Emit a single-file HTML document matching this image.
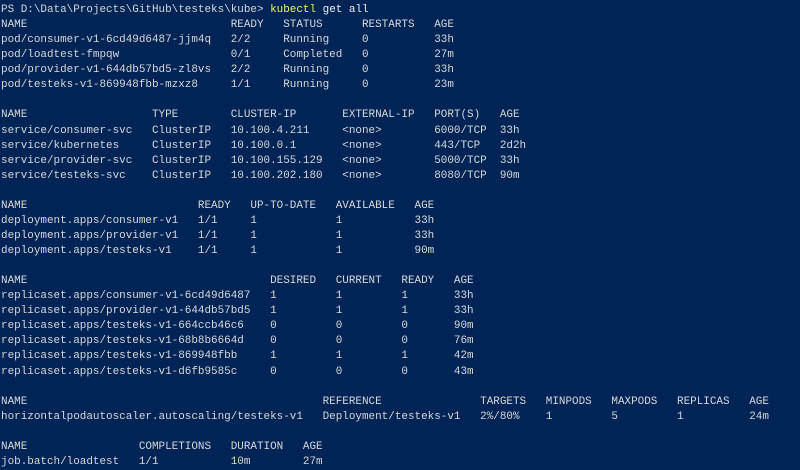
<!DOCTYPE html>
<html><head><meta charset="utf-8">
<style>
html,body{margin:0;padding:0;background:#012456;width:800px;height:469px;overflow:hidden}
pre{margin:0;position:absolute;left:1px;top:3px;font-family:"Liberation Mono",monospace;font-size:10.95px;line-height:15.07px;color:#d8d8d8;white-space:pre}
.y{color:#f5f56a}.w{color:#f0f0f0}
</style></head><body>
<pre>PS D:\Data\Projects\GitHub\testeks\kube&gt; <span class="y">kubectl</span> <span class="w">get all</span>
NAME                               READY   STATUS      RESTARTS   AGE
pod/consumer-v1-6cd49d6487-jjm4q   2/2     Running     0          33h
pod/loadtest-fmpqw                 0/1     Completed   0          27m
pod/provider-v1-644db57bd5-zl8vs   2/2     Running     0          33h
pod/testeks-v1-869948fbb-mzxz8     1/1     Running     0          23m

NAME                   TYPE        CLUSTER-IP       EXTERNAL-IP   PORT(S)   AGE
service/consumer-svc   ClusterIP   10.100.4.211     &lt;none&gt;        6000/TCP  33h
service/kubernetes     ClusterIP   10.100.0.1       &lt;none&gt;        443/TCP   2d2h
service/provider-svc   ClusterIP   10.100.155.129   &lt;none&gt;        5000/TCP  33h
service/testeks-svc    ClusterIP   10.100.202.180   &lt;none&gt;        8080/TCP  90m

NAME                          READY   UP-TO-DATE   AVAILABLE   AGE
deployment.apps/consumer-v1   1/1     1            1           33h
deployment.apps/provider-v1   1/1     1            1           33h
deployment.apps/testeks-v1    1/1     1            1           90m

NAME                                     DESIRED   CURRENT   READY   AGE
replicaset.apps/consumer-v1-6cd49d6487   1         1         1       33h
replicaset.apps/provider-v1-644db57bd5   1         1         1       33h
replicaset.apps/testeks-v1-664ccb46c6    0         0         0       90m
replicaset.apps/testeks-v1-68b8b6664d    0         0         0       76m
replicaset.apps/testeks-v1-869948fbb     1         1         1       42m
replicaset.apps/testeks-v1-d6fb9585c     0         0         0       43m

NAME                                             REFERENCE               TARGETS   MINPODS   MAXPODS   REPLICAS   AGE
horizontalpodautoscaler.autoscaling/testeks-v1   Deployment/testeks-v1   2%/80%    1         5         1          24m

NAME                 COMPLETIONS   DURATION   AGE
job.batch/loadtest   1/1           10m        27m</pre>
</body></html>
